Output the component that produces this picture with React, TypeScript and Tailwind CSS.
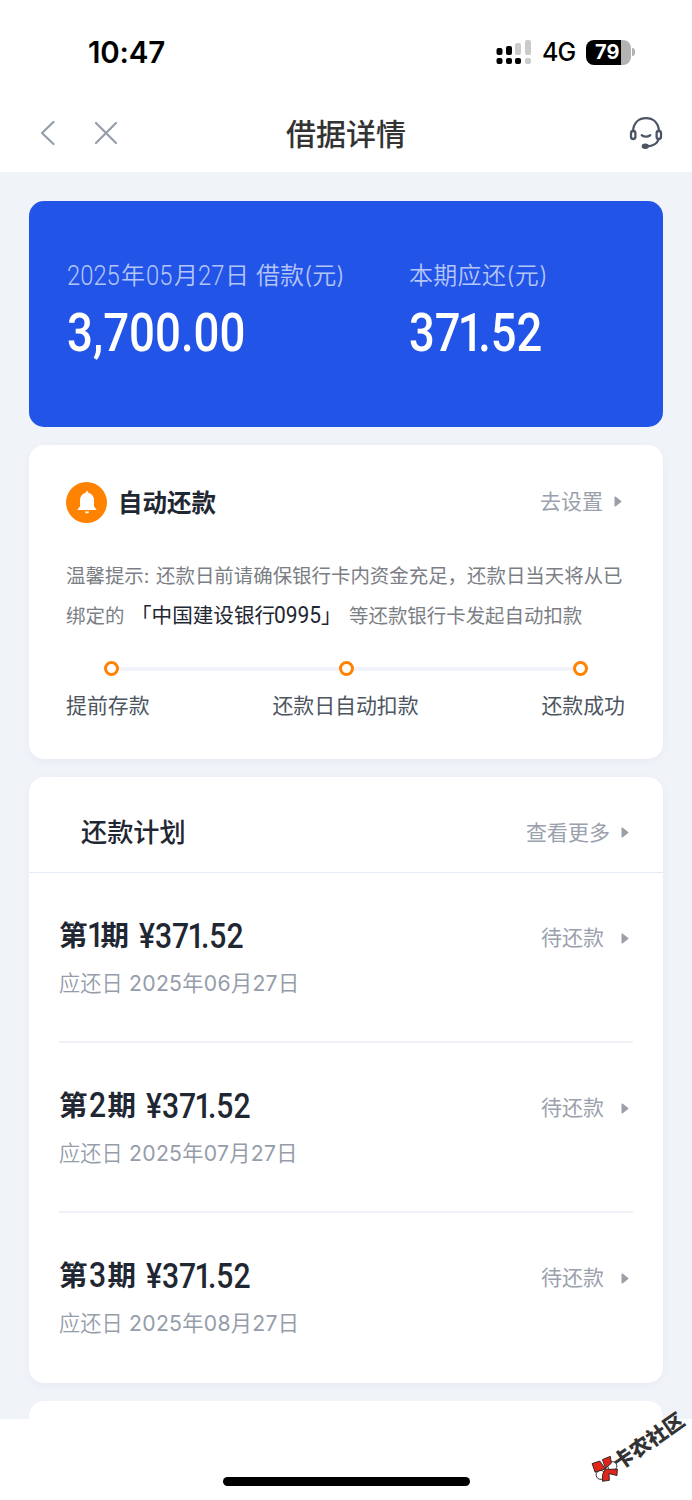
import type { ReactNode } from 'react';

type Installment = {
  term: number;
  dueMonth: string;
};

const installments: Installment[] = [
  { term: 1, dueMonth: '06' },
  { term: 2, dueMonth: '07' },
  { term: 3, dueMonth: '08' },
];

const Triangle = () => (
  <svg viewBox="0 0 8 11" className="w-2 h-[11px] shrink-0" fill="#9a9fa8">
    <path d="M0.5 1.2 Q0.5 0 1.5 0.6 L7.2 4.9 Q7.9 5.5 7.2 6.1 L1.5 10.4 Q0.5 11 0.5 9.8 Z" />
  </svg>
);

const StatusBar = () => (
  <div className="h-[94px] pl-[88px] pr-[57px] pt-[32px] flex justify-between text-black">
    <div className="h-10 leading-10 text-[29.5px] font-semibold tracking-[-0.2px]">10:47</div>
    <div className="h-10 flex items-center">
      <svg viewBox="0 0 35 25" className="w-[35px] h-[25px]">
        <rect x="0.5" y="8" width="6" height="7" rx="2" />
        <rect x="10" y="6" width="6" height="9" rx="2" />
        <rect x="19" y="3" width="6" height="12" rx="2" fill="#cbcbcb" />
        <rect x="29" y="0" width="6" height="15" rx="2" fill="#cbcbcb" />
        <rect x="0.5" y="18" width="6" height="6" rx="2" />
        <rect x="10" y="18" width="6" height="6" rx="2" />
        <rect x="19" y="18" width="6" height="6" rx="2" />
        <rect x="29" y="18" width="6" height="6" rx="2" fill="#cbcbcb" />
      </svg>
      <span className="ml-[11px] w-[34px] pt-[2px] text-[25px] font-medium tracking-[-0.8px]">4G</span>
      <div className="ml-[10px] w-[45px] h-[25px] rounded-[8px] overflow-hidden bg-[linear-gradient(to_right,#000_35px,#b3b3b3_35px)] text-white text-[20px] leading-[25px] font-bold pl-[9px]">
        79
      </div>
      <div className="ml-[1px] w-[3px] h-2 rounded-r-full bg-[#b3b3b3]" />
    </div>
  </div>
);

const NavBar = () => (
  <div className="h-[78px] pl-[40px] pr-[29px] flex items-center justify-between">
    <div className="w-[109px] flex items-center gap-[38px]">
      <svg viewBox="0 0 16 26" className="w-4 h-[26px]" fill="none" stroke="#959daa" strokeWidth="2.2" strokeLinecap="round" strokeLinejoin="round">
        <path d="M13.5 2 L2 13 L13.5 24" />
      </svg>
      <svg viewBox="0 0 24 24" className="w-6 h-6" fill="none" stroke="#959daa" strokeWidth="2.2" strokeLinecap="round">
        <path d="M2 2 L22 22 M22 2 L2 22" />
      </svg>
    </div>
    <h1 className="text-[30px] leading-10 pt-px font-medium text-[#333]">借据详情</h1>
    <div className="w-[120px] flex justify-end">
      <svg viewBox="0 0 34 34" className="w-[34px] h-[34px]" fill="none" stroke="#4b5563" strokeWidth="2.3" strokeLinecap="round">
        <path d="M4 14.5 C5 6.5 10 2.2 17 2.2 S29 6.5 30 14.5" />
        <rect x="2" y="15" width="4.4" height="8" rx="2.2" />
        <rect x="27.6" y="15" width="4.4" height="8" rx="2.2" />
        <path d="M12.8 19.2 Q17 22 21.2 19.2" />
        <path d="M29.5 23.5 C28 28 24 30 18 30.3" />
        <ellipse cx="16.3" cy="30.2" rx="2.5" ry="1.6" fill="#4b5563" />
      </svg>
    </div>
  </div>
);

// Condensed figures, with the "1" set tighter than the other digits
const Amount = ({ value, className }: { value: string; className: string }) => (
  <span className={`inline-block origin-left whitespace-nowrap font-[Roboto] ${className}`}>
    {value.split(/(1)/).map((part, i) =>
      part === '1' ? (
        <span key={i} className="-ml-[0.06em] -mr-[0.12em]">1</span>
      ) : (
        part
      ),
    )}
  </span>
);

const DateDigits = ({ children, className }: { children: string; className: string }) => (
  <span className={`font-[Roboto] text-[28px] font-[350] ${className}`}>
    <span className="inline-block origin-left scale-x-[.85]">{children}</span>
  </span>
);

const SummaryCard = () => (
  <section className="h-[226px] rounded-[15px] bg-[#2254e8] pl-[38px] pt-[55px] flex">
    <div className="w-[342px]">
      <div className="h-10 flex items-center font-[350] text-[24px] text-[#b4c5f8] whitespace-nowrap">
        <DateDigits className="w-[54px]">2025</DateDigits>
        <span className="w-[25px]">年</span>
        <DateDigits className="w-[28px]">05</DateDigits>
        <span className="w-[24px]">月</span>
        <DateDigits className="w-[27px]">27</DateDigits>
        <span className="w-[31px]">日</span>
        <span>借款(元)</span>
      </div>
      <div className="mt-[2px] h-[68px] leading-[68px] text-[54px] font-medium text-white">
        <Amount value="3,700.00" className="scale-x-[.845]" />
      </div>
    </div>
    <div>
      <div className="h-10 flex items-center font-[350] text-[24px] tracking-[0.3px] text-[#b4c5f8]">本期应还(元)</div>
      <div className="mt-[2px] h-[68px] leading-[68px] text-[54px] font-medium text-white">
        <Amount value="371.52" className="scale-x-[.84]" />
      </div>
    </div>
  </section>
);

const steps = ['提前存款', '还款日自动扣款', '还款成功'];

const Dot = () => <i className="w-[15px] h-[15px] rounded-full border-[3px] border-[#ff8200] bg-white" />;

const AutoRepayCard = () => (
  <section className="h-[314px] rounded-[15px] bg-white shadow-[0_2px_10px_rgba(30,50,90,0.04)] px-[37px] pt-[36px]">
    <div className="h-[42px] flex items-center">
      <div className="w-[41px] h-[41px] rounded-full bg-[#ff8200] flex items-center justify-center">
        <svg viewBox="0 0 20 23" className="w-5 h-[23px]" fill="#fff">
          <path d="M10 0 Q11.2 0 11.3 1.8 Q17 3.4 17 9.5 V15.5 L19.4 18.3 Q19.6 19 19 19 H1 Q0.4 19 0.6 18.3 L3 15.5 V9.5 Q3 3.4 8.7 1.8 Q8.8 0 10 0 Z" />
          <path d="M7.8 20.5 H12.2 Q11.8 22.5 10 22.5 T7.8 20.5 Z" />
        </svg>
      </div>
      <h2 className="ml-[11px] pt-[3px] text-[24.5px] font-bold text-[#1f2733]">自动还款</h2>
      <div className="ml-auto pr-[4px] pb-px flex items-center gap-[11px] text-[21px] text-[#9aa1ad]">
        <span>去设置</span>
        <Triangle />
      </div>
    </div>
    <div className="mt-[33px] text-[19.45px] leading-10 text-[#7b7e84] whitespace-nowrap">
      <p className="h-10 flex">
        <span className="w-[90px]">温馨提示:</span>
        <span>还款日前请确保银行卡内资金充足，还款日当天将从已</span>
      </p>
      <p className="h-10 flex">
        <span className="w-[65px]">绑定的</span>
        <span className="w-[143px] text-[20.6px] text-[#1f2733]">「中国建设银行</span>
        <span className="w-[47px] font-[Roboto] text-[23px] text-[#1f2733]"><span className="inline-block origin-left scale-x-[.91]">0995</span></span>
        <span className="w-[28px] text-[20.6px] text-[#1f2733]">」</span>
        <span>等还款银行卡发起自动扣款</span>
      </p>
    </div>
    <div className="mt-[25px] px-[38px] flex items-center">
      <Dot />
      <b className="flex-1 h-1 bg-[#f0f3f9]" />
      <Dot />
      <b className="flex-1 h-1 bg-[#f0f3f9]" />
      <Dot />
    </div>
    <div className="mt-[15px] h-[30px] pr-px leading-[30px] flex justify-between text-[20.9px] text-[#4d5560]">
      {steps.map((step) => (
        <span key={step}>{step}</span>
      ))}
    </div>
  </section>
);

const StatusLink = ({ children, className }: { children: ReactNode; className: string }) => (
  <div className={`flex items-center text-[21px] leading-[30px] text-[#9aa1ad] ${className}`}>
    <span>{children}</span>
    <Triangle />
  </div>
);

const InstallmentRow = ({ term, dueMonth }: Installment) => (
  <div className="mx-[30px] h-[170px] pt-[43px] border-b-2 border-[#f0f2fa] last:border-b-0">
    <div className="h-10 flex items-center justify-between pr-1">
      <div className="flex items-center leading-10 font-bold text-[28.5px] text-[#1f2733]">
        <span>第</span>
        <span className={`font-[Roboto] font-medium text-[35px] ${term === 1 ? '-ml-px w-[14px]' : 'ml-px w-[19px]'}`}>
          <span className="inline-block origin-left scale-x-[.86]">{term}</span>
        </span>
        <span>期</span>
        <span className="ml-[10px] font-medium text-[35px]">
          <Amount value="¥371.52" className="scale-x-[.86]" />
        </span>
      </div>
      <StatusLink className="gap-[17px] mt-[4px]">待还款</StatusLink>
    </div>
    <div className="mt-[12px] leading-[30px] h-[30px] text-[21.2px] text-[#959daa] flex whitespace-nowrap">
      <span className="w-[70px] font-[350]">应还日</span>
      <span className="tracking-[0.3px]">2025年{dueMonth}月27日</span>
    </div>
  </div>
);

const PlanCard = () => (
  <section className="h-[606px] rounded-[15px] bg-white shadow-[0_2px_10px_rgba(30,50,90,0.04)]">
    <div className="h-[96px] pl-[52px] pr-[34px] pt-[16px] flex items-center justify-between border-b border-[#e4ebf4]">
      <h2 className="text-[26.2px] font-medium text-[#1f2733]">还款计划</h2>
      <StatusLink className="gap-[11px]">查看更多</StatusLink>
    </div>
    {installments.map((item) => (
      <InstallmentRow key={item.term} {...item} />
    ))}
  </section>
);

const CommunityMark = () => (
  <div className="absolute left-[592px] top-[1456px] w-[112px] flex items-center origin-[12px_12px] -rotate-[35deg]">
    <svg viewBox="0 0 26 26" className="w-[26px] h-[26px] shrink-0 rotate-[6deg]" stroke="#222" strokeWidth="0.8">
      <circle cx="20" cy="13.5" r="4.5" fill="#fff" />
      <circle cx="5.5" cy="15.5" r="4.5" fill="#fff" />
      <path d="M3.5 1.5 L11.5 3 L12.5 12.5 L2 10.5 Z" fill="#e0251b" />
      <path d="M13 12 L14.5 3 L23 4 L20.5 10.5 Z" fill="#e0251b" />
      <path d="M12.5 12.5 L16 15 L23 18.5 L19.5 24 L13.5 18.5 L10.5 24.5 L4 22 L7.5 16 Z" fill="#e0251b" />
    </svg>
    <span className="-ml-[3px] pt-1 text-[20.4px] leading-6 font-black text-[#333] whitespace-nowrap">卡农社区</span>
  </div>
);

export default function App() {
  return (
    <div className="relative w-[692px] h-[1500px] overflow-hidden bg-white font-['Inter','Noto_Sans_CJK_SC',sans-serif]">
      <StatusBar />
      <NavBar />
      <main className="h-[1247px] overflow-hidden bg-[#f0f3f8] px-[29px] pt-[29px] flex flex-col gap-[18px] [&>section]:shrink-0">
        <SummaryCard />
        <AutoRepayCard />
        <PlanCard />
        <section className="h-20 rounded-[15px] bg-white" />
      </main>
      <div className="mx-auto mt-[58px] w-[247px] h-[9px] rounded-full bg-black" />
      <CommunityMark />
    </div>
  );
}
